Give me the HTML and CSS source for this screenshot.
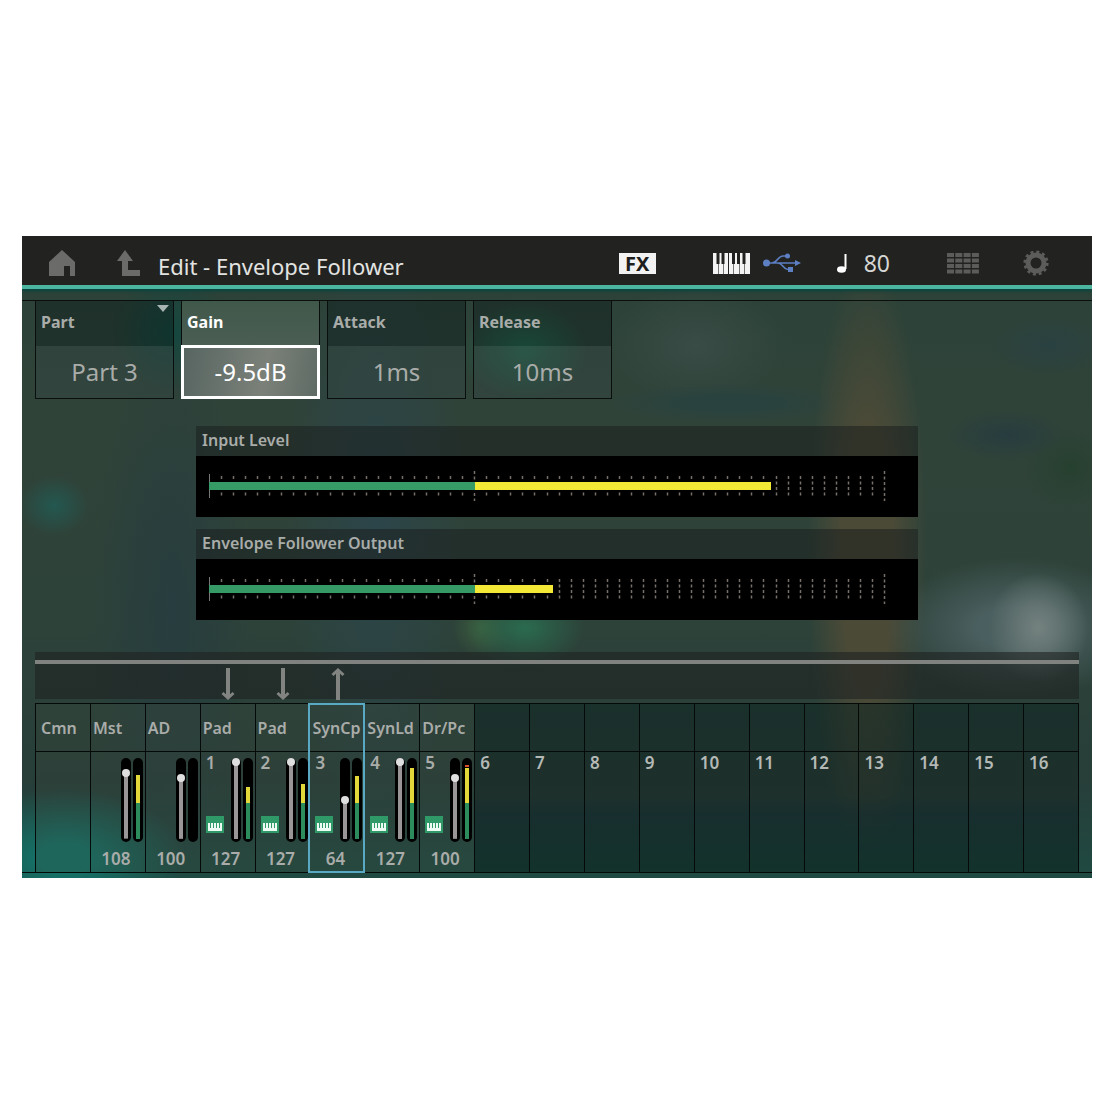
FILE: index.html
```html
<!DOCTYPE html>
<html lang="en">
<head>
  <meta charset="UTF-8" />
  <title>Edit - Envelope Follower</title>
  <meta name="viewport" content="width=device-width, initial-scale=1.0" />
  <link rel="stylesheet" href="styles.css">
</head>
<body>
  <main class="screen">
    <header class="topbar">
      <button class="icon-btn home" aria-label="Home">
        <svg width="26" height="26" viewBox="0 0 26 26"><path fill="#6b6b6a" d="M13 0 26 12V26H21V16H15V26H0V12Z"/></svg>
      </button>
      <button class="icon-btn up" aria-label="Up">
        <svg width="24" height="26" viewBox="0 0 24 26"><path fill="#6b6b6a" d="M8 0 16 11H11V20H23V26H5V11H0Z"/></svg>
      </button>
      <h1>Edit - Envelope Follower</h1>
      <div class="status">
        <button class="fx">FX</button>
        <div class="ports">
          <svg width="37" height="21" viewBox="0 0 37 21" role="img" aria-label="Keyboard">
            <path fill="#f4f4f4" d="M0 0H37V21H0Z"/>
            <path stroke="#222321" stroke-width="3" d="M5 0V11M10 0V11M20.500 0V11M25.500 0V11M31 0V11"/>
            <path stroke="#777876" stroke-width="1" d="M5.500 11V21M10.500 11V21M20.500 11V21M26.500 11V21M31.500 11V21"/>
            <path stroke="#222321" stroke-width="1" d="M15.500 0V21"/>
          </svg>
          <svg width="38" height="20" viewBox="0 0 38 20" role="img" aria-label="USB" fill="none" stroke="#5d7fc4" stroke-width="1.600">
            <path d="M3 10H34M9 10C14 10 15 3 20 3H23M15 10C20 10 20 16.500 25 16.500H27"/>
            <g fill="#5d7fc4" stroke="none">
              <circle cx="3.500" cy="10" r="3.500"/>
              <circle cx="24.500" cy="3" r="2.500"/>
              <rect x="25" y="14" width="5" height="5"/>
              <path d="M32 7 38 10 32 13Z"/>
            </g>
          </svg>
        </div>
        <div class="tempo">
          <svg width="10" height="19" viewBox="0 0 10 19" role="img" aria-label="Tempo">
            <ellipse cx="4.500" cy="15.500" rx="4.500" ry="3.200" fill="#fff"/>
            <path stroke="#fff" stroke-width="2" d="M8.500 0V15"/>
          </svg>
          <span>80</span>
        </div>
        <button class="icon-btn" aria-label="Live set">
          <svg width="32" height="21" viewBox="0 0 32 21"><path stroke="#5c5c5b" stroke-width="4" stroke-dasharray="7 1.300" d="M0 2H32M0 7.500H32M0 13H32M0 18.500H32"/></svg>
        </button>
        <button class="icon-btn" aria-label="Utility">
          <svg width="26" height="26" viewBox="0 0 26 26" fill="none" stroke="#5c5c5b">
            <circle cx="13" cy="13" r="8" stroke-width="5"/>
            <circle cx="13" cy="13" r="11.300" stroke-width="2.600" stroke-dasharray="3 2.917"/>
          </svg>
        </button>
      </div>
    </header>

    <section class="params">
      <div class="param part">
        <label for="part">Part</label>
        <svg class="caret" width="12" height="7" viewBox="0 0 12 7"><path fill="#a9b5b2" d="M0 0H12L6 7Z"/></svg>
        <select id="part">
          <option>Part 1</option>
          <option>Part 2</option>
          <option selected>Part 3</option>
          <option>Part 4</option>
          <option>Part 5</option>
        </select>
      </div>
      <div class="param active">
        <label for="gain">Gain</label>
        <input id="gain" type="text" value="-9.5dB" />
      </div>
      <div class="param">
        <label for="attack">Attack</label>
        <input id="attack" type="text" value="1ms" />
      </div>
      <div class="param">
        <label for="release">Release</label>
        <input id="release" type="text" value="10ms" />
      </div>
    </section>

    <section class="levels">
      <div class="level">
        <h2>Input Level</h2>
        <svg class="scale" data-end="575" viewBox="0 0 722 61" role="img" aria-label="Input Level meter"></svg>
      </div>
      <div class="level">
        <h2>Envelope Follower Output</h2>
        <svg class="scale" data-end="357" viewBox="0 0 722 61" role="img" aria-label="Envelope Follower Output meter"></svg>
      </div>
    </section>

    <section class="mixer">
      <div class="routing" id="routing"></div>
      <div class="strips" id="strips"></div>
    </section>
    <div class="footer"></div>
  </main>

  <script>
    const parts = [
      { name: "Cmn" },
      { name: "Mst", volume: 108, meter: 82 },
      { name: "AD", volume: 100, meter: 0 },
      { name: "Pad", num: 1, volume: 127, meter: 67, keys: true, arrow: "down" },
      { name: "Pad", num: 2, volume: 127, meter: 70, keys: true, arrow: "down" },
      { name: "SynCp", num: 3, volume: 64, meter: 81, keys: true, arrow: "up", selected: true },
      { name: "SynLd", num: 4, volume: 127, meter: 91, keys: true },
      { name: "Dr/Pc", num: 5, volume: 100, meter: 91, keys: true, peak: true }
    ];
    for (let n = 6; n <= 16; n++) parts.push({ name: "", num: n, empty: true });

    const arrows = {
      down: '<svg width="14" height="32" viewBox="0 0 14 32" fill="none" stroke="#828482"><path stroke-width="4" d="M7 0V29"/><path stroke-width="3" d="M1.500 25 7 30 12.500 25"/></svg>',
      up: '<svg width="14" height="32" viewBox="0 0 14 32" fill="none" stroke="#828482"><path stroke-width="4" d="M7 3V32"/><path stroke-width="3" d="M1.500 7 7 2 12.500 7"/></svg>'
    };
    const keysIcon = '<svg class="keys" width="18" height="17" viewBox="0 0 18 17"><path fill="#2f9968" d="M0 0H18V17H0Z"/><path fill="#eefaf4" d="M2 7H16V15H2Z"/><path stroke="#2f9968" d="M4.500 7V12M7.500 7V12M10.500 7V12M13.500 7V12"/></svg>';

    function fader(p) {
      if (p.volume === undefined) return "";
      return `
        <input class="fader" type="range" min="0" max="127" value="${p.volume}"
          aria-label="${p.name} ${p.num || ""} volume" style="--level: ${p.volume / 127}">
        <div class="vu"><div class="vu-fill" style="height: ${p.meter}%"></div>${p.peak ? '<div class="vu-peak"></div>' : ""}</div>`;
    }

    document.getElementById("routing").innerHTML = parts.map(p =>
      `<div>${arrows[p.arrow] || ""}</div>`).join("");

    document.getElementById("strips").innerHTML = parts.map(p => `
      <div class="strip ${p.selected ? "selected" : ""} ${p.empty ? "empty" : ""}">
        <button class="name">${p.name}</button>
        <div class="channel">
          <div class="side"><span>${p.num || ""}</span>${p.keys ? keysIcon : ""}</div>
          ${fader(p)}
        </div>
        <div class="volume">${p.volume || ""}</div>
      </div>`).join("");

    document.querySelectorAll(".fader").forEach(el => {
      el.oninput = () => {
        el.style.setProperty("--level", el.value / 127);
        el.closest(".strip").querySelector(".volume").textContent = el.value;
      };
    });

    // 56 ticks, long ones at the unity mark and at the end
    function drawScale(svg) {
      const left = 13, mid = 279, right = 688, end = Number(svg.dataset.end);
      let ticks = "", marks = "";
      for (let i = 1; i <= 56; i++) {
        const x = Math.round(left + i * (right - left) / 56) + 0.5;
        if (i === 22 || i === 56) marks += `M${x} 15V45`;
        else ticks += `M${x} 20V40`;
      }
      svg.innerHTML = `
        <path stroke="#77706a" stroke-width="1.500" stroke-dasharray="3 2.500" d="${ticks}"/>
        <path stroke="#77706a" stroke-width="1.500" stroke-dasharray="3 2.500" d="${marks}"/>
        <rect x="${left}" y="25" width="${end - left}" height="10" fill="#000"/>
        <path stroke="#777" stroke-width="1" d="M13.500 18V42"/>
        <rect x="${left}" y="26" width="${mid - left}" height="8" fill="#369a66"/>
        <rect x="${mid}" y="26" width="${end - mid}" height="8" fill="#f4e836"/>`;
    }
    document.querySelectorAll(".scale").forEach(drawScale);
  </script>
</body>
</html>
```
FILE: styles.css
```css
* {
  box-sizing: border-box;
}
body {
  margin: 0;
  padding: 0 22px;
  min-height: 100vh;
  display: flex;
  align-items: center;
  background: #fff;
  font-family: "Noto Sans", sans-serif;
  color: #a9aca9;
}
button, input, select {
  font-family: inherit;
  color: inherit;
  margin: 0;
  padding: 0;
  border: none;
  background: none;
}
button {
  cursor: pointer;
}
svg {
  display: block;
}
.screen {
  flex: 1;
  min-width: 0;
  overflow: hidden;
  background:
    radial-gradient(ellipse 120px 70px at 4% 97%, #157167 20%, transparent),
    radial-gradient(ellipse 50px 55px at 95% 61%, #74827f, transparent),
    radial-gradient(ellipse 130px 70px at 93% 61%, #4a5f5f 30%, transparent),
    radial-gradient(ellipse 65px 50px at 47% 18%, #23694f, transparent),
    radial-gradient(ellipse 60px 40px at 47% 61%, #2a6b4f, transparent),
    radial-gradient(ellipse 30px 30px at 43% 61%, #3d5f3d, transparent),
    radial-gradient(ellipse 60px 300px at 79% 50%, #4a4a37 45%, transparent),
    radial-gradient(ellipse 60px 60px at 14% 15%, #14473f, transparent),
    radial-gradient(ellipse 35px 30px at 3% 42%, #235850, transparent),
    radial-gradient(ellipse 60px 25px at 92% 31%, #273c3f, transparent),
    radial-gradient(ellipse 45px 40px at 98% 36%, #26402f, transparent),
    radial-gradient(ellipse 60px 30px at 96% 17%, #2a4142, transparent),
    radial-gradient(ellipse 120px 20px at 66% 26%, #29423f 30%, transparent),
    radial-gradient(ellipse 90px 60px at 63% 17%, #394c46, transparent),
    radial-gradient(ellipse 90px 300px at 33% 45%, #2c454a, transparent),
    radial-gradient(ellipse 80px 260px at 14% 58%, #273d3f, transparent),
    linear-gradient(#2b4238, #304339 30%, #2d4239 60%, #273e39 85%, #1f4a42);
}
.topbar {
  display: flex;
  align-items: center;
  height: 53px;
  padding: 5px 43px 0 27px;
  background: #222321;
  border-bottom: 4px solid #4bb5a0;
  box-shadow: 0 2px 3px #06463f;
}
.up {
  margin-left: 42px;
}
h1 {
  margin: 5px 0 0 17px;
  font-size: 22px;
  line-height: 30px;
  font-weight: 400;
  color: #e3e4e2;
  white-space: nowrap;
}
.status {
  display: flex;
  align-items: center;
  margin-left: auto;
}
.fx {
  width: 37px;
  height: 21px;
  margin-right: 57px;
  background: #f2f2f2;
  color: #1d1d1d;
  font-size: 20px;
  line-height: 21px;
  font-weight: 700;
}
.ports {
  display: flex;
  align-items: center;
  gap: 13px;
  margin-right: 36px;
}
.tempo {
  display: flex;
  align-items: center;
  gap: 17px;
  margin-right: 57px;
  font-size: 23px;
  line-height: 26px;
  color: #d5d6d4;
}
.status .icon-btn + .icon-btn {
  margin-left: 44px;
}
.params {
  display: flex;
  gap: 7px;
  margin-top: 11px;
  padding: 0 13px;
  border-top: 1px solid #0a0f0d;
}
.param {
  position: relative;
  width: 139px;
  border: 1px solid #0a0f0d;
  border-top: none;
  background: rgba(10, 26, 22, 0.4);
}
.param label {
  display: block;
  height: 45px;
  padding: 9px 5px;
  font-size: 16px;
  line-height: 24px;
  font-weight: 700;
}
.param input, .param select {
  display: block;
  width: 100%;
  height: 52px;
  padding: 0 0 1px;
  font-size: 24px;
  text-align: center;
  text-align-last: center;
  background: rgba(130, 150, 145, 0.18);
  border-radius: 0;
  appearance: none;
}
.caret {
  position: absolute;
  top: 4px;
  right: 4px;
}
.param.active {
  color: #fff;
  background: linear-gradient(#40584a, #586460);
}
.param.active input {
  outline: 3px solid #fff;
  outline-offset: -2px;
  background: linear-gradient(100deg, #566460, #7b8179 60%, #5d6a64);
}
.levels {
  display: grid;
  gap: 12px;
  margin: 27px 174px 0;
}
.level {
  background: rgba(24, 28, 28, 0.5);
}
.level h2 {
  margin: 0;
  padding: 2px 6px 4px;
  font-size: 16px;
  line-height: 24px;
  font-weight: 600;
}
.scale {
  width: 100%;
  background: #000;
}
.mixer {
  margin: 32px 13px 0;
}
.routing, .strips {
  display: grid;
  grid-template-columns: repeat(19, minmax(0, 1fr));
}
.routing {
  height: 47px;
  padding: 16px 0 0 1px;
  background: linear-gradient(rgba(30, 34, 33, 0.6) 8px, #80827f 8px 12px, rgba(30, 34, 33, 0.6) 12px);
}
.routing svg {
  margin: 0 auto;
}
.strips {
  margin-top: 4px;
  border-top: 1px solid #050908;
  border-right: 1px solid #050908;
}
.strip {
  border-left: 1px solid #050908;
  background: rgba(60, 70, 60, 0.25);
  font-size: 17px;
  font-weight: 600;
}
.strip.empty {
  background: linear-gradient(rgba(10, 32, 29, 0.5), rgba(24, 38, 34, 0.6) 55%, rgba(18, 38, 40, 0.7) 65%, rgba(16, 44, 38, 0.8));
}
.strip.selected {
  outline: 2px solid #5aa9c4;
  outline-offset: -1px;
  z-index: 1;
}
.name {
  display: block;
  width: 100%;
  height: 48px;
  padding-left: 2px;
  border-bottom: 1px solid #050908;
  text-align: left;
  font-size: 16px;
  font-weight: 600;
  white-space: nowrap;
}
.strip:first-child .name {
  padding-left: 5px;
}
.channel {
  display: flex;
  gap: 2px;
  height: 90px;
  padding-top: 6px;
}
.side {
  display: flex;
  flex-direction: column;
  justify-content: space-between;
  width: 28px;
  padding: 0 0 9px 5px;
}
.side span {
  line-height: 10px;
}
.empty .side {
  color: #b4b9b6;
}
.fader {
  writing-mode: vertical-lr;
  direction: rtl;
  appearance: none;
  width: 10px;
  height: 84px;
  border-radius: 5px;
  background: linear-gradient(#9a9596, #9a9596) left 3px bottom 3px / 4px calc(var(--level) * 76px) no-repeat, #000;
}
.fader::-webkit-slider-thumb {
  appearance: none;
  width: 8px;
  height: 8px;
  border-radius: 50%;
  background: #e0dfe0;
}
.vu {
  display: flex;
  flex-direction: column-reverse;
  width: 10px;
  height: 84px;
  padding: 3px;
  border-radius: 5px;
  background: #000;
}
/* green up to 36px, yellow above it */
.vu-fill {
  background: linear-gradient(to top, #2d8c5c 36px, #e2d83a 36px);
}
.vu-peak {
  height: 2px;
  margin-bottom: 1px;
  background: #d8502a;
}
.volume {
  height: 30px;
  padding: 5px 4px 0 0;
  line-height: 24px;
  text-align: center;
}
.footer {
  height: 6px;
  border-top: 1px solid #050908;
}
@media (max-width: 900px) {
  .levels {
    margin-left: 13px;
    margin-right: 13px;
  }
}
```
